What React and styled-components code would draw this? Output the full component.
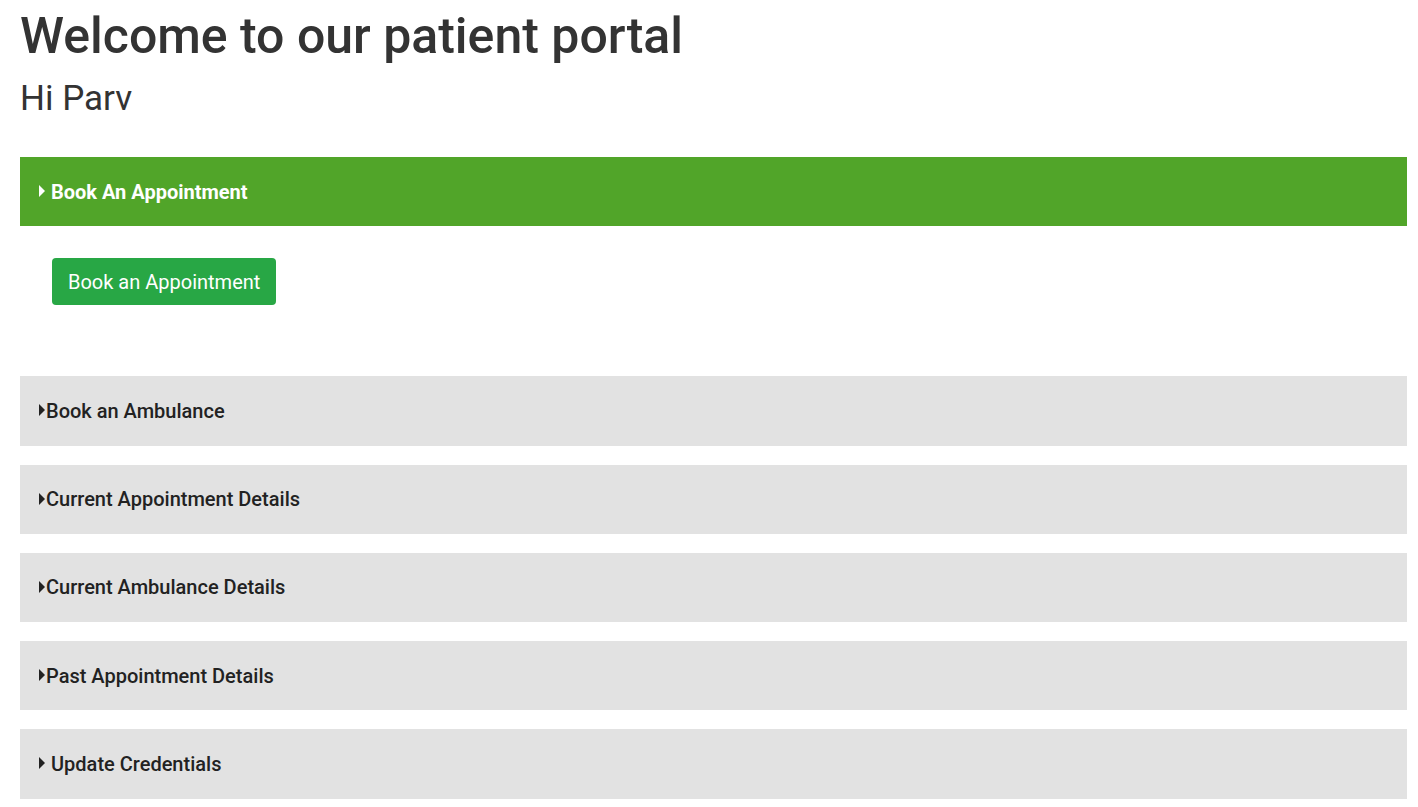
import React, { useState } from "react";
import styled, { createGlobalStyle } from "styled-components";

const GlobalStyle = createGlobalStyle`
  body {
    margin: 8px;
    background: #fff;
    font-family: Roboto, "Liberation Sans", Arial, sans-serif;
    color: #333;
  }
`;

const sections = [
  { title: "Book An Appointment", spaced: true },
  { title: "Book an Ambulance" },
  { title: "Current Appointment Details" },
  { title: "Current Ambulance Details" },
  { title: "Past Appointment Details" },
  { title: "Update Credentials", spaced: true },
];

const App = () => {
  const [open, setOpen] = useState(0);

  return (
    <>
      <GlobalStyle />
      <Page>
        <Title>Welcome to our patient portal</Title>
        <Greeting>Hi Parv</Greeting>
        <List>
          {sections.map((s, i) => (
            <Section key={s.title}>
              <Header $active={open === i} onClick={() => setOpen(open === i ? -1 : i)}>
                <Caret $active={open === i} />
                <HeaderText $spaced={s.spaced} $active={open === i}>{s.title}</HeaderText>
              </Header>
              {open === i && i === 0 && (
                <Body>
                  <Button>Book an Appointment</Button>
                </Body>
              )}
            </Section>
          ))}
        </List>
      </Page>
    </>
  );
};

const Page = styled.div`
  padding: 1px 3px 0 12px;
`;

const Title = styled.h1`
  margin: 0 0 14px;
  font-size: 50px;
  font-weight: 500;
  line-height: 1.1;
  color: #333;
`;

const Greeting = styled.h2`
  margin: 0;
  font-size: 35px;
  font-weight: 400;
  line-height: 1.2;
  color: #333;
`;

const List = styled.div`
  margin-top: 37px;
  display: flex;
  flex-direction: column;
  gap: 19px;
`;

const Section = styled.div`
  display: flex;
  flex-direction: column;
`;

const Header = styled.div`
  height: 69.25px;
  display: flex;
  align-items: center;
  padding-left: 19px;
  background: ${(p) => (p.$active ? "#51a529" : "#e2e2e2")};
  color: ${(p) => (p.$active ? "#fff" : "#222")};
  cursor: pointer;
`;

const Caret = styled.span`
  width: 0;
  height: 0;
  border-top: 6px solid transparent;
  border-bottom: 6px solid transparent;
  border-left: 6px solid ${(p) => (p.$active ? "#fff" : "#222")};
  margin-top: -1px;
`;

const HeaderText = styled.span`
  margin-left: ${(p) => (p.$spaced ? "6px" : "1px")};
  font-size: 20px;
  font-weight: ${(p) => (p.$active ? 700 : 500)};
`;

const Body = styled.div`
  padding: 32px 32px 52px;
`;

const Button = styled.button`
  height: 47px;
  padding: 0 16px;
  border: none;
  border-radius: 4px;
  background: #28a745;
  color: #fff;
  font-family: Roboto, "Liberation Sans", Arial, sans-serif;
  font-size: 20px;
  font-weight: 400;
  cursor: pointer;
`;

export default App;
